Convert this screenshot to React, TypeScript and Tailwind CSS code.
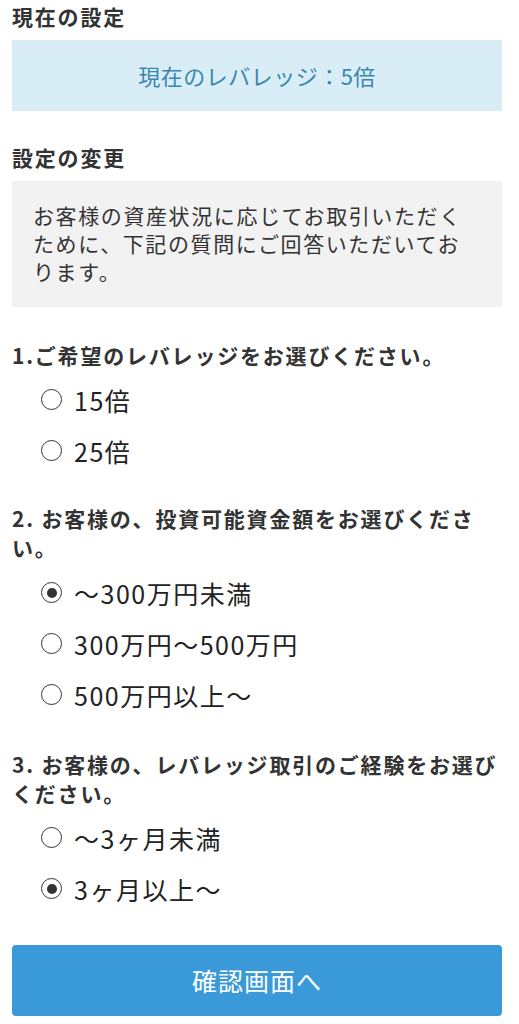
import React from "react";

const font = { fontFamily: '"Noto Sans CJK JP", "Noto Sans", sans-serif' };

function Radio({ checked, label }: { checked?: boolean; label: string }) {
  return (
    <div className="flex h-[51px] items-center pl-[29px]">
      <span className="flex h-[21px] w-[21px] shrink-0 items-center justify-center rounded-full border-[1.5px] border-[#333]">
        {checked && <span className="h-[10px] w-[10px] rounded-full bg-[#333]" />}
      </span>
      <span className="ml-[12px] text-[25px] leading-[30px] tracking-[1.5px] text-[#222]">{label}</span>
    </div>
  );
}

export default function App() {
  return (
    <div className="min-h-[1024px] bg-white pl-3 pr-[17px] pt-[2px] text-[#333]" style={font}>
      <h2 className="text-[21px] font-bold leading-[28px] tracking-[1.8px] text-[#333]">現在の設定</h2>
      <div className="mt-[10px] flex h-[71px] items-center justify-center bg-[#d9edf7] text-[22px] tracking-[0.5px] text-[#3a87ad]">
        現在のレバレッジ：5倍
      </div>
      <h2 className="mt-[32px] text-[21px] font-bold leading-[28px] tracking-[1.8px] text-[#333]">設定の変更</h2>
      <div className="mt-[10px] h-[126px] bg-[#f2f2f2] pl-[21px] pr-[30px] pt-[20px] text-[21px] leading-[28px] tracking-[1.6px] text-[#333]">
        お客様の資産状況に応じてお取引いただくために、下記の質問にご回答いただいております。
      </div>

      <h3 className="mt-[34px] text-[21px] font-bold leading-[28px] tracking-[1.8px] text-[#333]">1.ご希望のレバレッジをお選びください。</h3>
      <div className="mt-[5px]">
        <Radio label="15倍" />
        <Radio label="25倍" />
      </div>

      <h3 className="mt-[28px] text-[21px] font-bold leading-[29px] tracking-[1.8px] text-[#333]">2. お客様の、投資可能資金額をお選びください。</h3>
      <div className="mt-[5px]">
        <Radio checked label="〜300万円未満" />
        <Radio label="300万円〜500万円" />
        <Radio label="500万円以上〜" />
      </div>

      <h3 className="mt-[30px] text-[21px] font-bold leading-[29px] tracking-[1.8px] text-[#333]">3. お客様の、レバレッジ取引のご経験をお選びください。</h3>
      <div className="mt-[4px]">
        <Radio label="〜3ヶ月未満" />
        <Radio checked label="3ヶ月以上〜" />
      </div>

      <button className="mt-[31px] flex h-[71px] w-full items-center justify-center rounded-[4px] bg-[#3a9ad9] text-[25px] tracking-[1px] text-white">
        確認画面へ
      </button>
    </div>
  );
}
